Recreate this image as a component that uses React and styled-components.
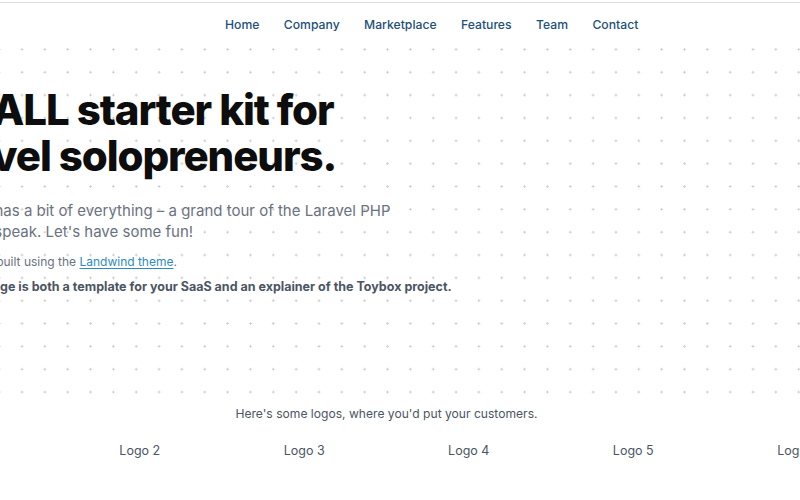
import React from "react";
import styled, { createGlobalStyle } from "styled-components";

const GlobalStyle = createGlobalStyle`
  html, body {
    margin: 0;
    padding: 0;
    background: #fff;
    overflow: hidden;
  }
  body {
    font-family: Inter, "Noto Sans", "Liberation Sans", sans-serif;
    -webkit-font-smoothing: antialiased;
  }
`;

const Page = styled.div`
  width: 800px;
  height: 500px;
  overflow: hidden;
  border-top: 1px solid #dcdcdc;
  margin-top: 2px;
`;

const Header = styled.header`
  height: 35px;
  display: flex;
  align-items: center;
  padding-left: 225px;
`;

const NavList = styled.nav`
  display: flex;
  gap: 24.4px;
  padding-top: 8px;
`;

const NavLink = styled.a`
  font-size: 12.2px;
  font-weight: 500;
  color: #1d4f7a;
  text-decoration: none;
`;

const Hero = styled.section`
  height: 366px;
  box-sizing: border-box;
  padding-top: 49px;
  background-image: radial-gradient(circle, #c9c9c9 0.9px, transparent 1.3px);
  background-size: 22.85px 22.85px;
  background-position: 10.6px 0;
`;

const HeroInner = styled.div`
  margin-left: -93px;
  width: 620px;
`;

const Title = styled.h1`
  margin: 0;
  font-size: 42px;
  line-height: 46px;
  font-weight: 800;
  letter-spacing: -1.1px;
  color: #0d0d0d;
`;

const Lead = styled.p`
  margin: 21px 0 0;
  font-size: 15px;
  line-height: 21px;
  color: #6b7280;
`;

const Note = styled.p`
  margin: ${(p) => p.$top || "11px"} 0 0;
  font-size: ${(p) => (p.$strong ? "12.5px" : "12px")};
  line-height: 17px;
  color: ${(p) => (p.$strong ? "#4b5563" : "#6b7280")};
  font-weight: ${(p) => (p.$strong ? 700 : 400)};
`;

const Link = styled.a`
  color: #2e8bc0;
  text-decoration: underline;
  text-underline-offset: 2px;
`;

const Logos = styled.section`
  margin-left: -107px;
  width: 987px;
  padding-top: 2px;
`;

const LogosTitle = styled.p`
  margin: 0;
  text-align: center;
  font-size: 12.1px;
  color: #4b5563;
`;

const LogoRow = styled.div`
  display: grid;
  grid-template-columns: repeat(6, 1fr);
  margin-top: 22px;
`;

const Logo = styled.div`
  text-align: center;
  font-size: 12.5px;
  color: #4b5563;
`;

const navItems = ["Home", "Company", "Marketplace", "Features", "Team", "Contact"];
const logos = ["Logo 1", "Logo 2", "Logo 3", "Logo 4", "Logo 5", "Logo 6"];

export default function App() {
  return (
    <>
      <GlobalStyle />
      <Page>
        <Header>
          <NavList>
            {navItems.map((n) => (
              <NavLink key={n} href="#">
                {n}
              </NavLink>
            ))}
          </NavList>
        </Header>
        <Hero>
          <HeroInner>
            <Title>
              The ALL starter kit for
              <br />
              Laravel solopreneurs.
            </Title>
            <Lead>
              The Toybox has a bit of everything – a grand tour of the Laravel PHP
              <br />
              world, so to speak. Let's have some fun!
            </Lead>
            <Note $top="11px">
              This demo was built using the <Link href="#">Landwind theme</Link>.
            </Note>
            <Note $strong $top="8px">
              This landing page is both a template for your SaaS and an explainer of the Toybox project.
            </Note>
          </HeroInner>
        </Hero>
        <Logos>
          <LogosTitle>Here's some logos, where you'd put your customers.</LogosTitle>
          <LogoRow>
            {logos.map((l) => (
              <Logo key={l}>{l}</Logo>
            ))}
          </LogoRow>
        </Logos>
      </Page>
    </>
  );
}
